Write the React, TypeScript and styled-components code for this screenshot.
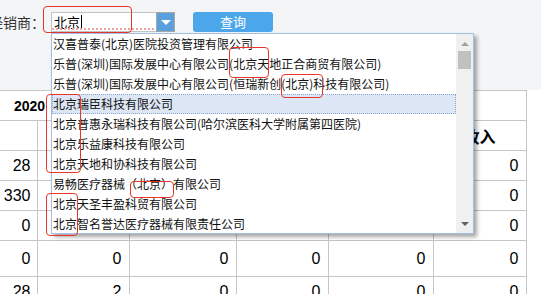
import React from "react";
import styled, { createGlobalStyle } from "styled-components";

const GlobalStyle = createGlobalStyle`
  body {
    margin: 0;
    background: #fff;
    font-family: "Noto Sans CJK SC", "Liberation Sans", sans-serif;
    overflow: hidden;
  }
`;

const Page = styled.div`
  position: relative;
  width: 541px;
  height: 294px;
  overflow: hidden;
`;

const TopBar = styled.div`
  height: 90px;
  background: #f4f5f7;
`;

const Toolbar = styled.div`
  display: flex;
  align-items: center;
  padding-top: 12px;
  margin-left: -11px;
`;

const Label = styled.span`
  width: 56px;
  margin-right: 6px;
  font-size: 14px;
  color: #333;
  white-space: nowrap;
`;

const Combo = styled.div`
  position: relative;
  display: flex;
  height: 20px;
`;

const Input = styled.div`
  position: relative;
  box-sizing: border-box;
  width: 105px;
  height: 20px;
  border: 1px solid #c4c4c4;
  border-right: none;
  background: #fff;
  font-size: 13px;
  line-height: 18px;
  padding-left: 2px;
  color: #000;
  display: flex;
  align-items: center;

  &::after {
    content: "";
    position: absolute;
    left: 0;
    right: 0;
    bottom: 1px;
    height: 2px;
    background: repeating-linear-gradient(90deg, #f3a0a0 0 2px, transparent 2px 4px);
  }
`;

const Caret = styled.span`
  display: inline-block;
  width: 1px;
  height: 14px;
  margin-left: 1px;
  background: #000;
`;

const ArrowButton = styled.div`
  box-sizing: border-box;
  width: 19px;
  height: 20px;
  border: 1px solid #a8a8a8;
  background: #5ba0dc;
  display: flex;
  align-items: center;
  justify-content: center;

  &::before {
    content: "";
    border-left: 5px solid transparent;
    border-right: 5px solid transparent;
    border-top: 5px solid #fff;
  }
`;

const QueryButton = styled.button`
  margin-left: 18px;
  width: 80px;
  height: 20px;
  border: none;
  border-radius: 3px;
  background: #4ba7ea;
  color: #fff;
  font-family: inherit;
  font-size: 13px;
  line-height: 20px;
  padding: 0;
`;

const Dropdown = styled.div`
  position: absolute;
  z-index: 5;
  top: 21px;
  left: 0;
  box-sizing: border-box;
  width: 423px;
  height: 201px;
  border: 1px solid #a3bfe6;
  background: #fff;
  box-shadow: 3px 3px 4px rgba(0, 0, 0, 0.35);
  display: flex;
`;

const List = styled.div`
  flex: 1;
  overflow: hidden;
`;

const Item = styled.div<{ $selected?: boolean }>`
  height: 20px;
  line-height: 20px;
  padding-left: 1px;
  font-size: 12px;
  color: #111;
  white-space: nowrap;
  background: ${(p) => (p.$selected ? "#dde6f5" : "transparent")};
  outline: ${(p) => (p.$selected ? "1px dotted #8ea6d6" : "none")};
  outline-offset: -1px;
`;

const ScrollBar = styled.div`
  width: 17px;
  background: #f0f0f0;
  display: flex;
  flex-direction: column;
  align-items: center;
`;

const ScrollArrow = styled.div<{ $down?: boolean }>`
  width: 0;
  height: 0;
  margin: ${(p) => (p.$down ? "auto 0 7px" : "8px 0 0")};
  border-left: 4px solid transparent;
  border-right: 4px solid transparent;
  ${(p) => (p.$down ? "border-top: 4px solid #606060;" : "border-bottom: 4px solid #a0a0a0;")}
`;

const ScrollThumb = styled.div`
  width: 13px;
  height: 18px;
  margin-top: 5px;
  background: #c1c1c1;
`;

const Table = styled.table`
  border-collapse: collapse;
  table-layout: fixed;
  width: 526px;
  font-family: "Liberation Sans", "Noto Sans CJK SC", sans-serif;
`;

const Row = styled.tr<{ $h: number }>`
  height: ${(p) => p.$h}px;
`;

const HeadCell = styled.th<{ $align?: string }>`
  border: 1px solid #c6c6c6;
  font-size: ${(p) => (p.$align === "left" ? 14 : 16)}px;
  font-weight: bold;
  color: #000;
  text-align: ${(p) => p.$align || "center"};
  padding: ${(p) => (p.$align === "left" ? "0 0 0 14px" : "0")};
  white-space: nowrap;
  overflow: hidden;
  &:first-child {
    border-left: none;
  }
`;

const Cell = styled.td`
  border: 1px solid #c6c6c6;
  font-size: 16px;
  color: #000;
  text-align: right;
  padding: 0 7px 0 0;
  &:first-child {
    border-left: none;
    padding-right: 6px;
  }
`;

const Mark = styled.div`
  position: absolute;
  z-index: 10;
  box-sizing: border-box;
  border: 1.5px solid #e8352b;
  border-radius: 4px;
`;

const items = [
  "汉喜普泰(北京)医院投资管理有限公司",
  "乐普(深圳)国际发展中心有限公司(北京天地正合商贸有限公司)",
  "乐普(深圳)国际发展中心有限公司(恒瑞新创(北京)科技有限公司)",
  "北京瑞臣科技有限公司",
  "北京普惠永瑞科技有限公司(哈尔滨医科大学附属第四医院)",
  "北京乐益康科技有限公司",
  "北京天地和协科技有限公司",
  "易畅医疗器械（北京）有限公司",
  "北京天圣丰盈科贸有限公司",
  "北京智名誉达医疗器械有限责任公司",
];

// cells hidden under the open list are left blank
const rows: { h: number; v: string[] }[] = [
  { h: 30, v: ["28", "", "", "", "", "0"] },
  { h: 30, v: ["330", "", "", "", "", "0"] },
  { h: 30, v: ["0", "", "", "", "", "0"] },
  { h: 36, v: ["0", "0", "0", "0", "0", "0"] },
  { h: 30, v: ["28", "2", "0", "0", "0", "0"] },
];

const marks = [
  { left: 43, top: 6, width: 89, height: 27 },
  { left: 229, top: 47, width: 40, height: 31 },
  { left: 281, top: 74, width: 42, height: 24 },
  { left: 46, top: 94, width: 35, height: 79 },
  { left: 130, top: 181, width: 44, height: 17 },
  { left: 46, top: 193, width: 32, height: 43 },
];

export default function App() {
  return (
    <Page>
      <GlobalStyle />
      <TopBar>
        <Toolbar>
          <Label>经销商：</Label>
          <Combo>
            <Input>
              北京
              <Caret />
            </Input>
            <ArrowButton />
            <Dropdown>
              <List>
                {items.map((name, i) => (
                  <Item key={i} $selected={i === 3}>
                    {name}
                  </Item>
                ))}
              </List>
              <ScrollBar>
                <ScrollArrow />
                <ScrollThumb />
                <ScrollArrow $down />
              </ScrollBar>
            </Dropdown>
          </Combo>
          <QueryButton>查询</QueryButton>
        </Toolbar>
      </TopBar>

      <Table>
        <colgroup>
          <col style={{ width: 37 }} />
          <col style={{ width: 92 }} />
          <col style={{ width: 107 }} />
          <col style={{ width: 92 }} />
          <col style={{ width: 105 }} />
          <col style={{ width: 93 }} />
        </colgroup>
        <tbody>
          <Row $h={30}>
            <HeadCell colSpan={2} $align="left">2020</HeadCell>
            <HeadCell colSpan={4} />
          </Row>
          <Row $h={30}>
            <HeadCell />
            <HeadCell />
            <HeadCell />
            <HeadCell />
            <HeadCell />
            <HeadCell>收入</HeadCell>
          </Row>
          {rows.map((r, i) => (
            <Row key={i} $h={r.h}>
              {r.v.map((v, j) => (
                <Cell key={j}>{v}</Cell>
              ))}
            </Row>
          ))}
        </tbody>
      </Table>

      {marks.map((m, i) => (
        <Mark key={i} style={m} />
      ))}
    </Page>
  );
}
